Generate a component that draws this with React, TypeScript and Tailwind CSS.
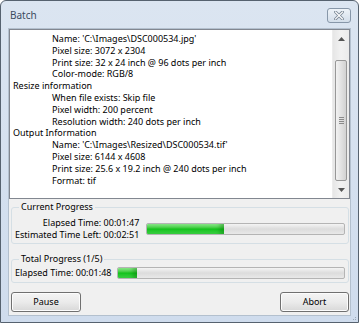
import React from "react";

const indent = [
  { t: "Name: 'C:\\Images\\DSC000534.jpg'", h: false },
  { t: "Pixel size: 3072 x 2304", h: false },
  { t: "Print size: 32 x 24 inch @ 96 dots per inch", h: false },
  { t: "Color-mode: RGB/8", h: false },
  { t: "Resize information", h: true },
  { t: "When file exists: Skip file", h: false },
  { t: "Pixel width: 200 percent", h: false },
  { t: "Resolution width: 240 dots per inch", h: false },
  { t: "Output Information", h: true },
  { t: "Name: 'C:\\Images\\Resized\\DSC000534.tif'", h: false },
  { t: "Pixel size: 6144 x 4608", h: false },
  { t: "Print size: 25.6 x 19.2 inch @ 240 dots per inch", h: false },
  { t: "Format: tif", h: false },
];

function Bar({ pct }: { pct: number }) {
  return (
    <div className="flex-1 h-[12px] rounded-[2px] border border-[#b4b4b4] bg-gradient-to-b from-[#f4f4f4] via-[#dcdcdc] to-[#e8e8e8] overflow-hidden flex">
      <div
        className="h-full bg-gradient-to-b from-[#8cec8c] via-[#0fc21a] to-[#3ad243] shadow-[inset_-6px_0_4px_-2px_rgba(0,100,0,0.35)]"
        style={{ width: `${pct}%` }}
      />
    </div>
  );
}

function Btn({ label, w }: { label: string; w: string }) {
  return (
    <button
      className={`${w} h-[20px] rounded-[3px] border border-[#707070] bg-gradient-to-b from-[#f4f4f4] via-[#ebebeb] to-[#d8d8d8] text-[9px] text-black shadow-[inset_0_0_0_1px_#fcfcfc]`}
    >
      {label}
    </button>
  );
}

export default function App() {
  return (
    <div
      className="w-[359px] h-[323px] relative flex flex-col border border-[#56626f] rounded-t-[6px] bg-gradient-to-b from-[#dbe5f1] to-[#cfdced] text-black"
      style={{ fontFamily: '"Noto Sans", "Segoe UI", sans-serif' }}
    >
      {/* title bar */}
      <div className="h-[27px] flex items-center justify-between pl-[9px] pr-[7px]">
        <span className="text-[10px] text-[#3b4b5e] leading-none mt-[1px]">Batch</span>
        <div className="w-[24px] h-[15px] mt-[2px] rounded-[3px] border border-[#8797a9] bg-gradient-to-b from-[#eef3f8] to-[#d3deea] flex items-center justify-center">
          <svg width="10" height="9" viewBox="0 0 10 9">
            <path
              d="M1.5 1 L8.5 8 M8.5 1 L1.5 8"
              stroke="#7f8c9a"
              strokeWidth="3"
              strokeLinecap="square"
            />
            <path
              d="M1.5 1 L8.5 8 M8.5 1 L1.5 8"
              stroke="#ffffff"
              strokeWidth="1.2"
              strokeLinecap="square"
            />
          </svg>
        </div>
      </div>

      {/* client area */}
      <div className="flex-1 mx-[7px] mb-[6px] border border-[#b3c0ce] bg-[#f0f0f0] flex flex-col text-[9px]">
        {/* text box */}
        <div className="h-[170px] border border-[#828790] bg-white flex">
          <div className="flex-1 pt-[3px] pl-[3px] leading-[11.8px]">
            {indent.map((l, i) => (
              <div key={i} className={l.h ? "" : "pl-[39px]"}>
                {l.t}
              </div>
            ))}
          </div>
          {/* scrollbar */}
          <div className="w-[17px] flex flex-col bg-gradient-to-r from-[#e6e6e6] via-[#f2f2f2] to-[#ebebeb] border-l border-[#ececec]">
            <div className="h-[17px] flex items-center justify-center">
              <svg width="7" height="4" viewBox="0 0 7 4">
                <path d="M0 4 L3.5 0 L7 4 Z" fill="#555" />
              </svg>
            </div>
            <div className="flex-1 pt-[13px] px-[2px]">
              <div className="h-[121px] rounded-[2px] border border-[#979797] bg-gradient-to-r from-[#f2f2f2] via-[#e2e2e2] to-[#d2d2d2] flex flex-col items-center justify-center gap-[1px]">
                <div className="w-[5px] h-[1px] bg-[#8a8a8a]" />
                <div className="w-[5px] h-[1px] bg-[#8a8a8a]" />
                <div className="w-[5px] h-[1px] bg-[#8a8a8a]" />
                <div className="w-[5px] h-[1px] bg-[#8a8a8a]" />
              </div>
            </div>
            <div className="h-[17px] flex items-center justify-center">
              <svg width="7" height="4" viewBox="0 0 7 4">
                <path d="M0 0 L3.5 4 L7 0 Z" fill="#555" />
              </svg>
            </div>
          </div>
        </div>

        {/* current progress */}
        <fieldset className="mt-[2px] ml-[2px] mr-[1px] border border-[#d5dfe5] rounded-[3px] px-[3px] pb-[2px] pt-[4px]">
          <legend className="ml-[4px] px-[2px] leading-[12px]">Current Progress</legend>
          <div className="flex items-center gap-[7px]">
            <div className="flex flex-col items-end leading-[12px] whitespace-nowrap">
              <div>Elapsed Time: 00:01:47</div>
              <div>Estimated Time Left: 00:02:51</div>
            </div>
            <Bar pct={39} />
          </div>
        </fieldset>

        {/* total progress */}
        <fieldset className="mt-[9px] ml-[2px] mr-[1px] border border-[#d5dfe5] rounded-[3px] px-[3px] pb-[3px] pt-[2px]">
          <legend className="ml-[4px] px-[2px] leading-[12px]">Total Progress (1/5)</legend>
          <div className="flex items-center gap-[6px]">
            <div className="leading-[12px] whitespace-nowrap">Elapsed Time: 00:01:48</div>
            <Bar pct={8} />
          </div>
        </fieldset>

        {/* buttons */}
        <div className="mt-[9px] flex justify-between pl-[2px] pr-[1px]">
          <Btn label="Pause" w="w-[70px]" />
          <Btn label="Abort" w="w-[69px]" />
        </div>
      </div>

      {/* resize grip */}
      <div className="absolute right-[2px] bottom-[2px] grid grid-cols-3 gap-[1px]">
        <span />
        <span />
        <span className="w-[1px] h-[1px] bg-[#9aa8b8]" />
        <span />
        <span className="w-[1px] h-[1px] bg-[#9aa8b8]" />
        <span className="w-[1px] h-[1px] bg-[#9aa8b8]" />
      </div>
    </div>
  );
}
